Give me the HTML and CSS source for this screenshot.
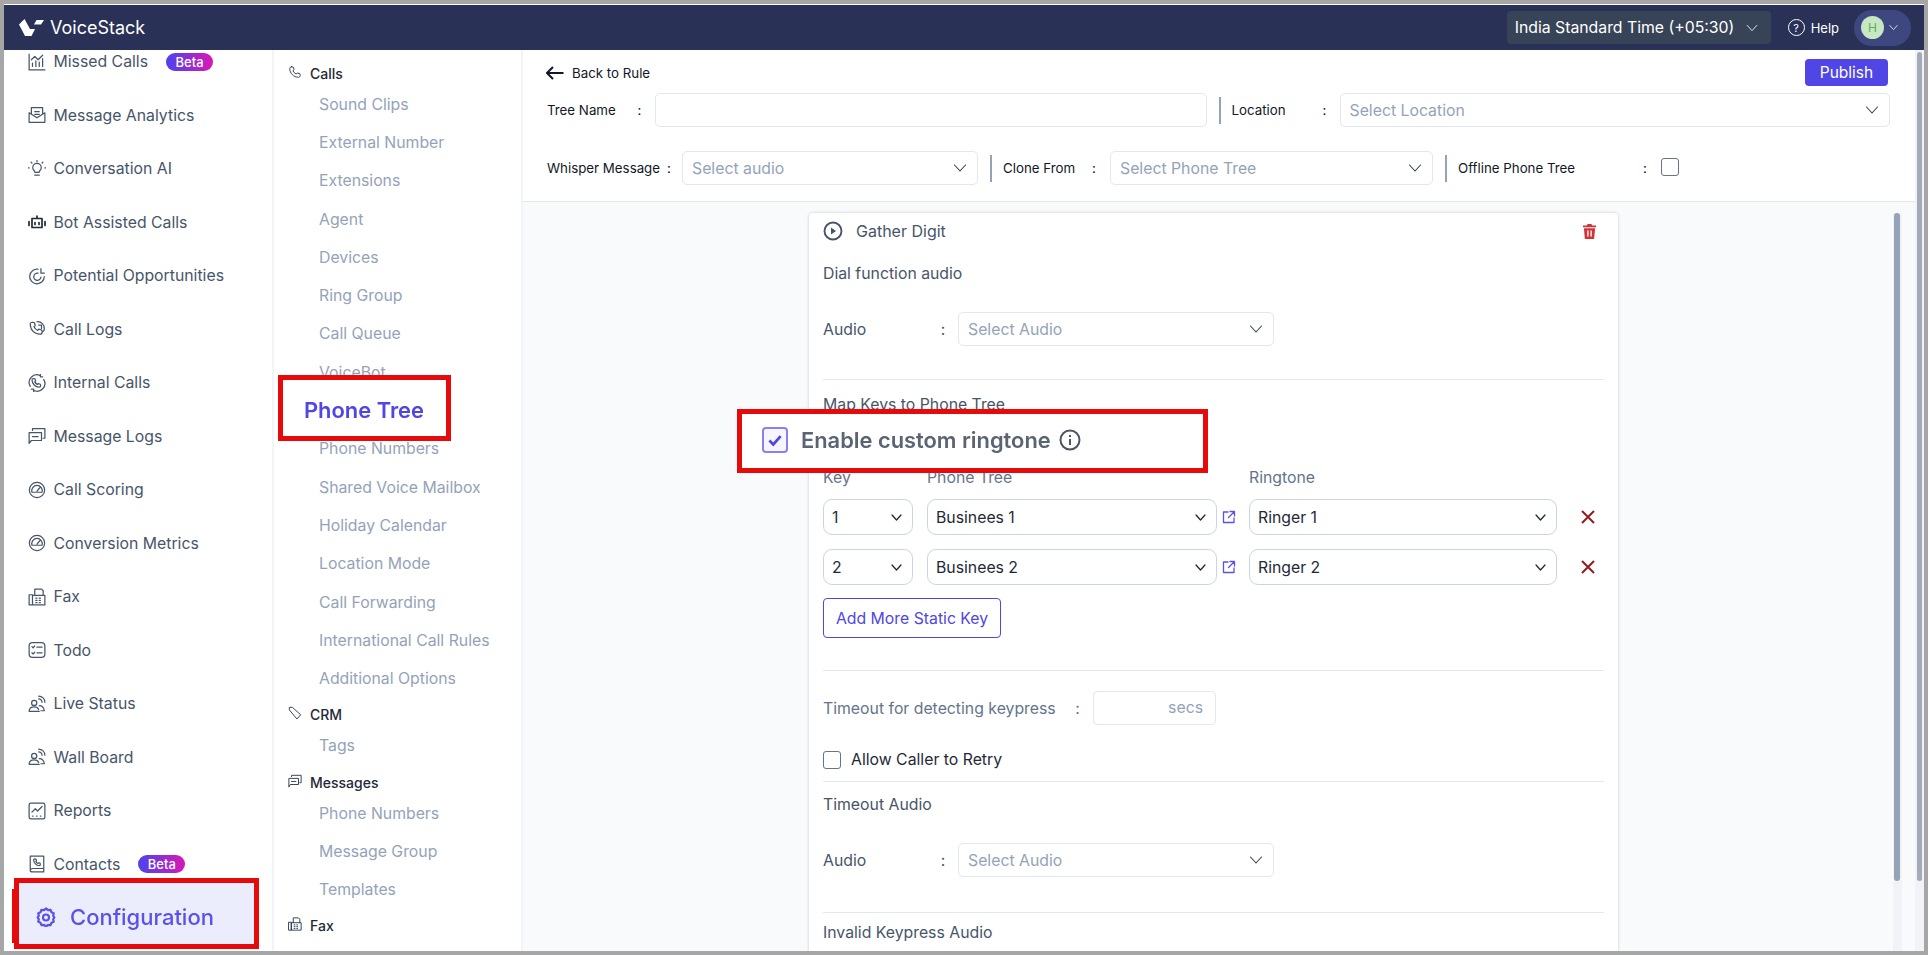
FILE: index.html
```html
<!DOCTYPE html>
<html lang="en">
<head>
    <meta charset="UTF-8">
    <title>VoiceStack - Phone Tree</title>
    <link rel="stylesheet" href="styles.css">
</head>
<body>
<svg class="sprites" width="0" height="0">
    <symbol id="i-phone" viewBox="0 0 16 16"><path d="M4 2l2 .4 1 3-1.4 1.2c.8 1.7 2 2.9 3.8 3.8L10.6 9l3 1 .4 2c0 1-1 2-2 2C6.5 14 2 9.5 2 4c0-1 1-2 2-2z"/></symbol>
    <symbol id="i-chart" viewBox="0 0 16 16"><path d="M1 1v14h14M4 12V9M7 12V7M10 12V8M13 12V5M3 6l3-3 3 3 4-4"/></symbol>
    <symbol id="i-mail" viewBox="0 0 16 16"><path d="M1 6v8.5h14V6l-7 4.5zM3 7V1.5h10V7M6 5h4M6 7.5h4"/></symbol>
    <symbol id="i-bulb" viewBox="0 0 16 16"><path d="M6 13.5h4M6.2 11c0-1.5-2-2-2-4.2a3.8 3.8 0 0 1 7.6 0c0 2.2-2 2.7-2 4.2zM8 .5v1M1 7H.2M15.8 7H15M2.8 2l.7.7M13.2 2l-.7.7"/></symbol>
    <symbol id="i-bot" viewBox="0 0 18 16"><path d="M4 4.5h10v9H4zM9 2v2.5M1 7.5v4M17 7.5v4M7 8.5v2M11 8.5v2" stroke-width="1.7"/></symbol>
    <symbol id="i-target" viewBox="0 0 16 16"><path d="M9 2a6.5 6.5 0 1 0 5.5 6.5M9 5.5a3.2 3.2 0 1 0 2.5 3.5M11.5 1.5v4h3"/></symbol>
    <symbol id="i-calllog" viewBox="0 0 16 16"><path d="M4 2l1.7.4.8 2.6-1.2 1c.7 1.5 1.7 2.5 3.3 3.3l1-1.2 2.6.8.4 1.7c0 1-.8 2-1.8 2C5.8 12.6 2 8.8 2 3.8 2 2.8 3 2 4 2zM8 1.5a6 6 0 0 1 6.5 6.5c0 1-.5 2-1.5 2.5M9.5 4.5H12v3"/></symbol>
    <symbol id="i-internal" viewBox="0 0 16 16"><path d="M5 4l1.2.4.6 1.8-.8.8c.5 1 1.3 1.8 2.3 2.3l.8-.8 1.8.6.4 1.2c0 .8-.6 1.4-1.4 1.4C6.5 11.7 3.6 8.8 3.6 5.4 3.6 4.6 4.2 4 5 4zM2 11a6.8 6.8 0 0 1 9-9.5M14 5a6.8 6.8 0 0 1-9 9.5M11 .5v2h2M5 15.5v-2H3"/></symbol>
    <symbol id="i-msg" viewBox="0 0 16 16"><path d="M1 14.5V5h11v7H3zM4 3V1.5h11V10h-1.5M4 8.5h5"/></symbol>
    <symbol id="i-gauge" viewBox="0 0 16 16"><circle cx="8" cy="8" r="6.8"/><path d="M3.5 10a4.7 4.7 0 1 1 9 0zM8 9l2.5-3"/></symbol>
    <symbol id="i-fax" viewBox="0 0 16 16"><path d="M1 6h3v9H1zM4 6.5h11V15H4zM6 6.5V1h6l1.5 1.5v4M7 9h1M10 9h1M7 11h1M10 11h1M7 13h1M10 13h1"/></symbol>
    <symbol id="i-todo" viewBox="0 0 16 16"><rect x="1" y="1.5" width="14" height="13" rx="3"/><path d="M3.5 5l1 1L6 4.5M8 5.5h4.5M3.5 10.5l1 1L6 10M8 10.5h4.5"/></symbol>
    <symbol id="i-live" viewBox="0 0 16 16"><circle cx="5.5" cy="7" r="2.3"/><path d="M1 14.5c0-2.5 2-4 4.5-4s3.5 1 4 2.5M1 14.5h9M9.5 3.5a3 3 0 0 1 3 3M9.5 1A5.5 5.5 0 0 1 15 6.5M10 9.5c1.7 0 4 1 4.5 4.5h-3"/></symbol>
    <symbol id="i-report" viewBox="0 0 16 16"><rect x="1" y="1" width="14" height="14" rx="1.5"/><path d="M3.5 9l3-3 2 2 4-4M4 12.5h.5M7.5 12.5H8M11 12.5h.5"/></symbol>
    <symbol id="i-book" viewBox="0 0 16 16"><path d="M2 1h12v11H4a2 2 0 0 0-2 2zM2 13.5c0 1 1 1.5 2 1.5h10v-3M6 3.5l1.2.3.4 1.4-.6.6c.4.8.9 1.3 1.7 1.7l.6-.6 1.4.4.3 1.2c0 .5-.5 1-1 1C7.5 9.5 5 7 5 4.5c0-.5.5-1 1-1z"/></symbol>
    <symbol id="i-tag" viewBox="0 0 16 16"><path d="M1.5 4V1.5H5l9.5 8.5-4 4.5z"/></symbol>
    <symbol id="i-chev" viewBox="0 0 16 16"><path d="M2.5 5L8 11l5.5-6"/></symbol>
    <symbol id="i-ext" viewBox="0 0 14 14"><path d="M6 2H1.5v10.5H12V8M8 1.5h4.5V6M12.5 1.5l-6 6"/></symbol>
</svg>

<div class="app">
    <header class="topbar">
        <div class="brand">
            <svg class="logo" viewBox="0 0 26 18"><path d="M0 5.5L5.5 0 11 10h5l-3.5 7H6z"/><path d="M17.5 1H25l-3 4.500h-7z"/></svg>
            <span>VoiceStack</span>
        </div>
        <div class="topbar-right">
            <div class="timezone">India Standard Time (+05:30) <svg class="ico chev-tz"><use href="#i-chev"/></svg></div>
            <div class="help"><span class="help-mark">?</span> Help</div>
            <div class="user"><span class="avatar">H</span><svg class="ico chev-user"><use href="#i-chev"/></svg></div>
        </div>
    </header>

    <div class="body-row">
        <nav class="side-main">
            <ul class="main-list">
                <li><svg class="ico"><use href="#i-chart"/></svg>Missed Calls <span class="beta">Beta</span></li>
                <li><svg class="ico"><use href="#i-mail"/></svg>Message Analytics</li>
                <li><svg class="ico"><use href="#i-bulb"/></svg>Conversation AI</li>
                <li><svg class="ico ico-dark"><use href="#i-bot"/></svg>Bot Assisted Calls</li>
                <li><svg class="ico"><use href="#i-target"/></svg>Potential Opportunities</li>
                <li><svg class="ico"><use href="#i-calllog"/></svg>Call Logs</li>
                <li><svg class="ico"><use href="#i-internal"/></svg>Internal Calls</li>
                <li><svg class="ico"><use href="#i-msg"/></svg>Message Logs</li>
                <li><svg class="ico"><use href="#i-gauge"/></svg>Call Scoring</li>
                <li><svg class="ico"><use href="#i-gauge"/></svg>Conversion Metrics</li>
                <li><svg class="ico"><use href="#i-fax"/></svg>Fax</li>
                <li><svg class="ico"><use href="#i-todo"/></svg>Todo</li>
                <li><svg class="ico"><use href="#i-live"/></svg>Live Status</li>
                <li><svg class="ico"><use href="#i-live"/></svg>Wall Board</li>
                <li><svg class="ico"><use href="#i-report"/></svg>Reports</li>
                <li><svg class="ico"><use href="#i-book"/></svg>Contacts <span class="beta">Beta</span></li>
            </ul>
        </nav>

        <nav class="side-sub">
            <h4><svg class="ico-sm"><use href="#i-phone"/></svg>Calls</h4>
            <a>Sound Clips</a>
            <a>External Number</a>
            <a>Extensions</a>
            <a>Agent</a>
            <a>Devices</a>
            <a>Ring Group</a>
            <a>Call Queue</a>
            <a>VoiceBot</a>
            <a>Phone Tree</a>
            <a>Phone Numbers</a>
            <a>Shared Voice Mailbox</a>
            <a>Holiday Calendar</a>
            <a>Location Mode</a>
            <a>Call Forwarding</a>
            <a>International Call Rules</a>
            <a>Additional Options</a>
            <h4><svg class="ico-sm"><use href="#i-tag"/></svg>CRM</h4>
            <a>Tags</a>
            <h4><svg class="ico-sm"><use href="#i-msg"/></svg>Messages</h4>
            <a>Phone Numbers</a>
            <a>Message Group</a>
            <a>Templates</a>
            <h4><svg class="ico-sm"><use href="#i-fax"/></svg>Fax</h4>
        </nav>

        <main class="content">
            <section class="toolbar">
                <div class="back-row">
                    <div class="back"><svg class="back-arrow" viewBox="0 0 18 14"><path d="M17.5 7h-16M7 1L1 7l6 6"/></svg>Back to Rule</div>
                    <button class="publish">Publish</button>
                </div>
                <div class="form-row row-one">
                    <label class="lab-tree">Tree Name</label><span class="colon">:</span>
                    <div class="field field-tree"></div>
                    <i class="vbar"></i>
                    <label class="lab-loc">Location</label><span class="colon">:</span>
                    <div class="field field-loc"><span>Select Location</span><svg class="ico chev"><use href="#i-chev"/></svg></div>
                </div>
                <div class="form-row row-two">
                    <label class="lab-whisper">Whisper Message</label><span class="colon colon-tight">:</span>
                    <div class="field field-whisper"><span>Select audio</span><svg class="ico chev"><use href="#i-chev"/></svg></div>
                    <i class="vbar"></i>
                    <label class="lab-clone">Clone From</label><span class="colon">:</span>
                    <div class="field field-clone"><span>Select Phone Tree</span><svg class="ico chev"><use href="#i-chev"/></svg></div>
                    <i class="vbar"></i>
                    <label class="lab-offline">Offline Phone Tree</label><span class="colon">:</span>
                    <span class="check check-offline"></span>
                </div>
            </section>

            <section class="canvas">
                <div class="card">
                    <div class="card-head">
                        <svg class="play" viewBox="0 0 20 20"><circle cx="10" cy="10" r="8.5"/><path class="play-tri" d="M8 6.5l5 3.5-5 3.5z"/></svg>
                        <span>Gather Digit</span>
                        <svg class="trash" viewBox="0 0 14 16"><path d="M5 0h4l1 1.5h4v2H0v-2h4zM1 4.5h12L12 16H2zM4.5 7v6.5H6V7zM8 7v6.5h1.500V7z" fill-rule="evenodd"/></svg>
                    </div>
                    <div class="card-block block-dial">
                        <p class="block-title">Dial function audio</p>
                        <div class="audio-row">
                            <label>Audio</label><span class="colon">:</span>
                            <div class="field field-audio"><span>Select Audio</span><svg class="ico chev"><use href="#i-chev"/></svg></div>
                        </div>
                    </div>
                    <div class="card-block block-keys">
                        <p class="block-title">Map Keys to Phone Tree</p>
                        <div class="key-grid">
                            <span class="col-label">Key</span><span class="col-label">Phone Tree</span><span></span><span class="col-label">Ringtone</span><span></span>
                            <div class="pick">1<svg class="ico"><use href="#i-chev"/></svg></div>
                            <div class="pick">Businees 1<svg class="ico"><use href="#i-chev"/></svg></div>
                            <svg class="ext"><use href="#i-ext"/></svg>
                            <div class="pick">Ringer 1<svg class="ico"><use href="#i-chev"/></svg></div>
                            <svg class="remove" viewBox="0 0 14 14"><path d="M1 1l12 12M13 1L1 13"/></svg>
                            <div class="pick">2<svg class="ico"><use href="#i-chev"/></svg></div>
                            <div class="pick">Businees 2<svg class="ico"><use href="#i-chev"/></svg></div>
                            <svg class="ext"><use href="#i-ext"/></svg>
                            <div class="pick">Ringer 2<svg class="ico"><use href="#i-chev"/></svg></div>
                            <svg class="remove" viewBox="0 0 14 14"><path d="M1 1l12 12M13 1L1 13"/></svg>
                        </div>
                        <button class="add-key">Add More Static Key</button>
                    </div>
                    <div class="card-block block-timeout">
                        <div class="timeout-row">
                            <label>Timeout for detecting keypress</label><span class="colon">:</span>
                            <div class="secs">secs</div>
                        </div>
                        <div class="retry-row"><span class="check"></span>Allow Caller to Retry</div>
                    </div>
                    <div class="card-block block-dial block-timeout-audio">
                        <p class="block-title">Timeout Audio</p>
                        <div class="audio-row">
                            <label>Audio</label><span class="colon">:</span>
                            <div class="field field-audio"><span>Select Audio</span><svg class="ico chev"><use href="#i-chev"/></svg></div>
                        </div>
                    </div>
                    <div class="card-block block-invalid">
                        <p class="block-title">Invalid Keypress Audio</p>
                    </div>
                </div>
                <div class="inner-scroll"><i></i></div>
            </section>
        </main>
        <div class="outer-scroll"><i></i></div>
    </div>

    <!-- enlarged callouts drawn over the page -->
    <div class="callout callout-config"><svg class="gear" viewBox="0 0 20 20"><path d="M10 1.5l2 1.5 2.5-.2 1 2.3 2.2 1.2-.5 2.5 1.1 1.700-1.100 1.700.5 2.500-2.200 1.200-1 2.300-2.500-.2-2 1.500-2-1.500-2.500.2-1-2.300-2.200-1.200.5-2.500-1.100-1.700 1.100-1.700-.5-2.500 2.200-1.200 1-2.300 2.500.2z"/><circle cx="10" cy="10.5" r="3"/></svg>Configuration</div>
    <div class="callout callout-tree">Phone Tree</div>
    <div class="callout callout-ring">
        <span class="big-check"><svg viewBox="0 0 16 16"><path d="M3 8.5L6.5 12 13 4.500"/></svg></span>
        Enable custom ringtone
        <svg class="info" viewBox="0 0 22 22"><circle cx="11" cy="11" r="9.5"/><path d="M11 10v6M11 6v2"/></svg>
    </div>
</div>
</body>
</html>
```
FILE: styles.css
```css
* {
    box-sizing: border-box;
    margin: 0;
    padding: 0;
}
html, body {
    height: 100%;
    overflow: hidden;
}
body {
    font-family: Inter, "Noto Sans", sans-serif;
    background-color: #a6a6a6;
    padding: 4px;
    color: #475569;
}
.sprites {
    position: absolute;
}
.app {
    position: relative;
    height: 100%;
    background-color: #fff;
    display: flex;
    flex-direction: column;
    padding-top: 1px;
}

/* shared icons */
.ico, .ico-sm, .ext {
    fill: none;
    stroke: #475569;
    stroke-width: 1.1;
    stroke-linecap: round;
    stroke-linejoin: round;
    flex: none;
}

/* top bar */
.topbar {
    height: 45px;
    flex: none;
    background-color: #293157;
    color: #fff;
    display: flex;
    align-items: center;
    justify-content: space-between;
    padding: 0 13px 0 15px;
}
.brand {
    display: flex;
    align-items: center;
    gap: 5px;
    font-size: 18px;
}
.logo {
    width: 26px;
    height: 18px;
    fill: #fff;
}
.topbar-right {
    display: flex;
    align-items: center;
}
.timezone {
    width: 264px;
    height: 33px;
    background-color: #374357;
    border-radius: 4px;
    font-size: 15.8px;
    display: flex;
    align-items: center;
    padding-left: 8px;
    gap: 11px;
    white-space: nowrap;
}
.chev-tz {
    stroke: #e2e8f0;
    width: 14px;
    height: 14px;
}
.help {
    display: flex;
    align-items: center;
    gap: 6px;
    font-size: 13px;
    margin-left: 17px;
}
.help-mark {
    width: 17px;
    height: 17px;
    border: 1px solid #fff;
    border-radius: 50%;
    font-size: 11px;
    display: flex;
    align-items: center;
    justify-content: center;
}
.user {
    width: 57px;
    height: 36px;
    border-radius: 18px;
    background-color: #3f4780;
    margin-left: 15px;
    display: flex;
    align-items: center;
    padding-left: 7px;
    gap: 4px;
}
.avatar {
    width: 23px;
    height: 23px;
    border-radius: 50%;
    background-color: #c6e7c1;
    color: #5fae5a;
    font-size: 12px;
    display: flex;
    align-items: center;
    justify-content: center;
}
.chev-user {
    stroke: #fff;
    width: 11px;
    height: 11px;
}

/* main sidebar */
.body-row {
    flex: 1;
    display: flex;
    min-height: 0;
}
.side-main {
    width: 270px;
    flex: none;
    overflow: hidden;
    border-right: 2px solid #f1f5f9;
}
.main-list {
    list-style: none;
    margin-top: -15px;
}
.main-list li {
    height: 53.5px;
    display: flex;
    align-items: center;
    padding-left: 24px;
    font-size: 15.8px;
    white-space: nowrap;
}
.main-list .ico {
    width: 18px;
    height: 18px;
    margin-right: 7.5px;
    stroke: #475569;
}
.main-list .ico-dark {
    stroke: #1f2937;
}
.beta {
    background: linear-gradient(90deg, #4a43f0, #d918b4);
    color: #fff;
    font-size: 13px;
    font-weight: 500;
    height: 18px;
    width: 47px;
    border-radius: 9px;
    display: flex;
    align-items: center;
    justify-content: center;
    margin-left: 18px;
}

/* second sidebar */
.side-sub {
    width: 249px;
    flex: none;
    overflow: hidden;
    border-right: 2px solid #f1f5f9;
    padding-top: 13px;
    display: flex;
    flex-direction: column;
}
.side-sub h4 {
    font-size: 14px;
    font-weight: 500;
    color: #1f2937;
    display: flex;
    align-items: center;
    height: 20px;
    flex: none;
    padding-left: 14px;
}
.ico-sm {
    width: 14px;
    height: 14px;
    margin-right: 8px;
    margin-top: -3px;
    stroke: #334155;
}
.side-sub a {
    font-size: 15.8px;
    color: #94a3b8;
    height: 38.3px;
    flex: none;
    display: flex;
    align-items: center;
    padding-left: 45px;
}
.side-sub h4 + a {
    margin-top: 2px;
}
.side-sub a + h4 {
    margin-top: 7px;
}

/* content header */
.content {
    flex: 1;
    min-width: 0;
    display: flex;
    flex-direction: column;
    position: relative;
}
.toolbar {
    height: 152px;
    flex: none;
    border-bottom: 1px solid #e2e8f0;
    padding: 9px 26px 0 24px;
    font-size: 13.3px;
    color: #111827;
}
.back-row {
    display: flex;
    justify-content: space-between;
    height: 27px;
    align-items: center;
}
.back {
    display: flex;
    align-items: center;
    gap: 8px;
}
.back-arrow {
    width: 18px;
    height: 14px;
    margin-left: -1px;
    fill: none;
    stroke: #111827;
    stroke-width: 2;
}
.publish {
    width: 83px;
    height: 27px;
    margin-right: 1px;
    border: none;
    border-radius: 4px;
    background-color: #4f46e5;
    color: #fff;
    font-family: inherit;
    font-size: 15.5px;
}
.form-row {
    display: flex;
    align-items: center;
}
.form-row label {
    flex: none;
    white-space: nowrap;
}
.row-one {
    margin-top: 7px;
}
.row-two {
    margin-top: 24px;
}
.colon {
    width: 16px;
    flex: none;
    text-align: center;
}
.form-row > .colon {
    margin-right: 8px;
}
.form-row > .colon-tight {
    width: 8px;
    margin-right: 9px;
}
.lab-tree {
    width: 84.5px;
}
.lab-loc {
    width: 85px;
}
.lab-whisper {
    width: 118px;
}
.lab-clone {
    width: 83px;
}
.lab-offline {
    width: 179px;
}
.field {
    height: 34px;
    border: 1px solid #e2e8f0;
    border-radius: 5px;
    background-color: #fff;
    display: flex;
    align-items: center;
    justify-content: space-between;
    padding: 0 9px;
    font-size: 15.8px;
    color: #94a3b8;
    flex: none;
}
.chev {
    width: 16px;
    height: 16px;
    stroke: #334155;
}
.field-tree {
    width: 552px;
    margin-left: -1px;
}
.field-loc {
    width: 550px;
    margin-left: -1px;
}
.field-whisper {
    width: 296px;
}
.field-clone {
    width: 323px;
}
.vbar {
    width: 2px;
    height: 27px;
    background-color: #94a3b8;
    margin: 0 11px 0 12px;
    flex: none;
}
.check {
    display: block;
    width: 18px;
    height: 18px;
    border: 1px solid #64748b;
    border-radius: 3px;
    background-color: #fff;
    flex: none;
}
.check-offline {
    margin-top: -3px;
}

/* canvas with the node card */
.canvas {
    flex: 1;
    min-height: 0;
    background-color: #f8fafc;
    overflow: hidden;
    position: relative;
    padding: 11px 0 0 286px;
}
.card {
    width: 809px;
    background-color: #fff;
    border-radius: 4px;
    box-shadow: 0 0 3px rgba(100, 116, 139, 0.35);
    font-size: 15.8px;
}
.card-head {
    height: 36px;
    display: flex;
    align-items: center;
    padding: 0 22px 0 14px;
    font-size: 16px;
    color: #475569;
    gap: 13px;
}
.play {
    width: 20px;
    height: 20px;
    fill: none;
    stroke: #475569;
    stroke-width: 1.9;
}
.play-tri {
    fill: #475569;
    stroke: none;
}
.trash {
    width: 13px;
    height: 15px;
    fill: #d13438;
    margin-left: auto;
}
.card-block {
    margin: 0 14px;
    border-bottom: 1px solid #e2e8f0;
}
.block-title {
    color: #475569;
    line-height: 20px;
}
.block-dial {
    height: 131px;
    padding-top: 15px;
}
.block-timeout-audio {
    padding-top: 13px;
}
.audio-row {
    display: flex;
    align-items: center;
    margin-top: 28px;
    color: #475569;
}
.audio-row label {
    width: 112px;
}
.audio-row .colon {
    margin-right: 7px;
}
.field-audio {
    width: 316px;
}
.block-keys {
    height: 291px;
    padding-top: 15px;
}
.key-grid {
    display: grid;
    grid-template-columns: 90px 304px 32px 308px 40px;
    align-items: center;
    margin-top: 54px;
}
.col-label {
    color: #64748b;
    line-height: 18px;
    height: 30px;
}
.key-grid > .col-label:nth-child(2) {
    margin-left: 14px;
}
.pick {
    height: 36px;
    border: 1px solid #cbd5e1;
    border-radius: 9px;
    background-color: #fff;
    color: #1f2937;
    display: flex;
    align-items: center;
    justify-content: space-between;
    padding: 0 9px 0 8px;
    margin-bottom: 14px;
}
.key-grid > .pick:nth-child(5n+2) {
    margin-left: 14px;
    width: 290px;
}
.pick .ico {
    width: 13px;
    height: 13px;
    stroke: #1f2937;
    stroke-width: 1.6;
}
.ext {
    width: 14px;
    height: 14px;
    stroke: #5b50e8;
    stroke-width: 1.3;
    margin: 0 0 14px 5px;
}
.remove {
    width: 14px;
    height: 14px;
    fill: none;
    stroke: #8f1f1f;
    stroke-width: 2;
    margin: 0 0 14px 24px;
}
.add-key {
    display: block;
    width: 178px;
    height: 40px;
    margin-top: -1px;
    border: 1px solid #4f46e5;
    border-radius: 4px;
    background-color: #fff;
    color: #4f46e5;
    font-family: inherit;
    font-size: 15.8px;
}
.block-timeout {
    height: 111px;
    padding-top: 20px;
}
.timeout-row {
    display: flex;
    align-items: center;
    color: #64748b;
}
.timeout-row label {
    width: 244px;
    white-space: nowrap;
}
.timeout-row .colon {
    width: 21px;
    margin-right: 5px;
}
.secs {
    width: 123px;
    height: 34px;
    border: 1px solid #e2e8f0;
    border-radius: 4px;
    text-align: right;
    line-height: 32px;
    padding-right: 12px;
    color: #94a3b8;
}
.retry-row {
    display: flex;
    align-items: center;
    gap: 10px;
    margin-top: 25px;
    color: #1f2937;
}
.block-invalid {
    height: 80px;
    border-bottom: none;
    padding-top: 10px;
}

/* scrollbars */
.inner-scroll {
    position: absolute;
    top: 11px;
    right: 13px;
    bottom: 0;
    width: 9px;
    background-color: #f1f3f7;
    padding-left: 1px;
}
.inner-scroll i {
    display: block;
    width: 6px;
    height: 668px;
    background-color: #94a3b8;
    border-radius: 3px;
}
.outer-scroll {
    width: 9px;
    flex: none;
    background-color: #f1f3f7;
    padding: 2px 2px 0;
}
.outer-scroll i {
    display: block;
    width: 5px;
    height: 829px;
    background-color: #a3aab8;
    border-radius: 3px;
}

/* red callouts */
.callout {
    position: absolute;
    border: 5px solid #e60a0a;
    background-color: #fff;
    display: flex;
    align-items: center;
    filter: blur(0.3px);
}
.callout-config {
    left: 10px;
    top: 874px;
    width: 245px;
    height: 71px;
    background-color: #ebedfd;
    color: #5b50e8;
    font-size: 22px;
    font-weight: 500;
    padding: 6px 0 0 17px;
    gap: 14px;
}
.callout-config::before {
    content: "";
    position: absolute;
    left: -7px;
    top: 6px;
    width: 2px;
    height: 54px;
    background-color: #e60a0a;
}
.gear {
    width: 20px;
    height: 20px;
    fill: none;
    stroke: #5b50e8;
    stroke-width: 2.2;
}
.callout-tree {
    left: 274px;
    top: 371px;
    width: 173px;
    height: 66px;
    color: #4f46e5;
    font-size: 21.9px;
    font-weight: 600;
    padding: 4px 0 0 21px;
}
.callout-ring {
    left: 733px;
    top: 405px;
    width: 471px;
    height: 64px;
    color: #5b6472;
    font-size: 21.85px;
    font-weight: 600;
    padding: 0 0 2px 20px;
}
.big-check {
    width: 26px;
    height: 26px;
    border: 2px solid #8a80ee;
    border-radius: 4px;
    background-color: #f7f6ff;
    margin-right: 13px;
    display: flex;
    align-items: center;
    justify-content: center;
}
.big-check svg {
    width: 18px;
    height: 18px;
    fill: none;
    stroke: #4f46e5;
    stroke-width: 2.4;
}
.info {
    width: 22px;
    height: 22px;
    margin-left: 8px;
    fill: none;
    stroke: #4b5563;
    stroke-width: 2;
}
```
